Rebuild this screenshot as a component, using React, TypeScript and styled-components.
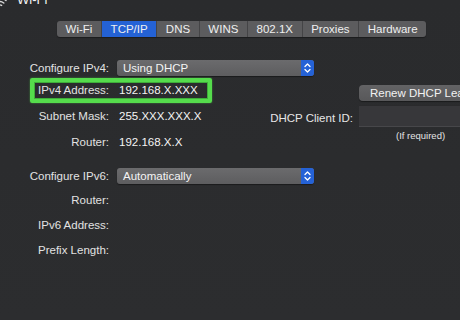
import styled, { createGlobalStyle } from "styled-components";

const GlobalStyle = createGlobalStyle`
  html, body {
    margin: 0;
    padding: 0;
    background: #2b2c2e;
  }
  body {
    width: 460px;
    height: 320px;
    overflow: hidden;
    font-family: "Liberation Sans", Arial, sans-serif;
    color: #e6e6e6;
  }
`;

const Window = styled.div`
  display: flex;
  flex-direction: column;
  width: 460px;
  height: 320px;
  background: linear-gradient(180deg, #2a2b2d 0%, #2c2d2f 100%);
`;

const Header = styled.div`
  display: flex;
  align-items: center;
  height: 16px;
  margin-top: -8px;
`;

const WifiGlyph = styled.svg`
  width: 14px;
  height: 12px;
  margin-left: -7px;
  margin-right: 10px;
  margin-top: 4px;
`;

const Title = styled.span`
  font-size: 13px;
  line-height: 16px;
  color: #f4f4f4;
`;

const TabBar = styled.div`
  display: flex;
  align-self: flex-start;
  margin: 13px 0 0 57px;
  height: 16px;
  background: #5c5c5e;
  border-radius: 3px;
  overflow: hidden;
  box-shadow: 0 1px 1px rgba(0, 0, 0, 0.35);
`;

const Tab = styled.div<{ $active?: boolean }>`
  padding: 0 8.6px;
  font-size: 11.5px;
  line-height: 16px;
  white-space: nowrap;
  color: #efefef;
  background: ${(p) => (p.$active ? "#2462d5" : "transparent")};
  border-left: 1px solid #444446;

  &:first-child {
    border-left: none;
  }
`;

const Form = styled.div`
  display: grid;
  grid-template-columns: 109px 145px 87px 1fr;
  grid-template-rows: 16px 28px 24px 28px 32px 24px 25px 26px;
  column-gap: 6px;
  margin-top: 23px;
  font-size: 11.5px;
`;

const Label = styled.div<{ $row: number; $spaced?: boolean }>`
  grid-row: ${(p) => p.$row};
  grid-column: 1;
  justify-self: end;
  align-self: center;
  margin-top: ${(p) => (p.$spaced ? "8px" : "0")};
  line-height: 16px;
  white-space: nowrap;
  color: #e2e2e2;
`;

const Value = styled.div<{ $row: number }>`
  grid-row: ${(p) => p.$row};
  grid-column: 2;
  align-self: center;
  padding-left: 4px;
  line-height: 16px;
  white-space: nowrap;
  color: #f4f4f4;
`;

const Popup = styled.div<{ $row: number; $spaced?: boolean }>`
  grid-row: ${(p) => p.$row};
  grid-column: 2 / 4;
  justify-self: start;
  align-self: center;
  margin-left: 2px;
  margin-top: ${(p) => (p.$spaced ? "8px" : "0")};
  display: flex;
  width: 197px;
  height: 16px;
  border-radius: 3px;
  overflow: hidden;
  background: linear-gradient(180deg, #6b6b6d 0%, #5d5d5f 100%);
  box-shadow: 0 1px 1px rgba(0, 0, 0, 0.4);
`;

const PopupText = styled.span`
  flex: 1;
  padding-left: 6px;
  line-height: 16px;
  color: #f4f4f4;
  white-space: nowrap;
`;

const Stepper = styled.span`
  display: flex;
  align-items: center;
  justify-content: center;
  width: 13px;
  background: #2562d6;
`;

const SideLabel = styled.div<{ $row: number }>`
  grid-row: ${(p) => p.$row};
  grid-column: 3;
  justify-self: end;
  align-self: center;
  margin-top: 3px;
  white-space: nowrap;
  color: #e6e6e6;
`;

const RenewButton = styled.button<{ $row: number }>`
  grid-row: ${(p) => p.$row};
  grid-column: 4;
  justify-self: start;
  align-self: end;
  margin-bottom: 3px;
  height: 16px;
  padding: 0 11px;
  border: none;
  border-radius: 4px;
  background: linear-gradient(180deg, #636365 0%, #58585a 100%);
  box-shadow: 0 1px 1px rgba(0, 0, 0, 0.4);
  font-family: inherit;
  font-size: 11.5px;
  line-height: 16px;
  color: #f2f2f2;
  white-space: nowrap;
`;

const TextField = styled.div<{ $row: number }>`
  grid-row: ${(p) => p.$row};
  grid-column: 4;
  justify-self: start;
  align-self: center;
  width: 130px;
  height: 22px;
  box-sizing: border-box;
  background: #37373a;
  border-top: 1px solid #2a2a2c;
  border-bottom: 1px solid #47474a;
`;

const Hint = styled.div<{ $row: number }>`
  grid-row: ${(p) => p.$row};
  grid-column: 4;
  justify-self: start;
  align-self: start;
  margin: 2px 0 0 37px;
  font-size: 9.5px;
  line-height: 11px;
  color: #e4e4e4;
  white-space: nowrap;
`;

const Highlight = styled.div<{ $row: number }>`
  grid-row: ${(p) => p.$row};
  grid-column: 1 / 3;
  justify-self: start;
  align-self: center;
  margin-left: 30px;
  width: 182px;
  height: 25px;
  box-sizing: border-box;
  border: 4px solid #55dc4c;
  border-radius: 2px;
  box-shadow: inset 0 0 0 1px #3fae3a, 0 0 2px rgba(85, 220, 76, 0.6);
  pointer-events: none;
`;

function StepperIcon() {
  return (
    <svg width="7" height="12" viewBox="0 0 7 12" fill="none">
      <path d="M1 4.5 L3.5 2 L6 4.5" stroke="#fff" strokeWidth="1.3" strokeLinecap="round" strokeLinejoin="round" />
      <path d="M1 7.5 L3.5 10 L6 7.5" stroke="#fff" strokeWidth="1.3" strokeLinecap="round" strokeLinejoin="round" />
    </svg>
  );
}

const tabs = ["Wi-Fi", "TCP/IP", "DNS", "WINS", "802.1X", "Proxies", "Hardware"];

export default function App() {
  return (
    <>
      <GlobalStyle />
      <Window>
        <Header>
          <WifiGlyph viewBox="0 0 14 12" fill="none">
            <path d="M1 4.5 A9 9 0 0 1 13 4.5" stroke="#d8d8d8" strokeWidth="1.4" strokeLinecap="round" />
            <path d="M3.2 7 A6 6 0 0 1 10.8 7" stroke="#d8d8d8" strokeWidth="1.4" strokeLinecap="round" />
            <path d="M5.4 9.4 A3 3 0 0 1 8.6 9.4" stroke="#d8d8d8" strokeWidth="1.4" strokeLinecap="round" />
          </WifiGlyph>
          <Title>Wi-Fi</Title>
        </Header>

        <TabBar>
          {tabs.map((t) => (
            <Tab key={t} $active={t === "TCP/IP"}>
              {t}
            </Tab>
          ))}
        </TabBar>

        <Form>
          <Label $row={1}>Configure IPv4:</Label>
          <Popup $row={1}>
            <PopupText>Using DHCP</PopupText>
            <Stepper>
              <StepperIcon />
            </Stepper>
          </Popup>

          <Label $row={2}>IPv4 Address:</Label>
          <Value $row={2}>192.168.X.XXX</Value>
          <RenewButton $row={2} type="button">
            Renew DHCP Lease
          </RenewButton>
          <Highlight $row={2} />

          <Label $row={3}>Subnet Mask:</Label>
          <Value $row={3}>255.XXX.XXX.X</Value>
          <SideLabel $row={3}>DHCP Client ID:</SideLabel>
          <TextField $row={3} />

          <Label $row={4}>Router:</Label>
          <Value $row={4}>192.168.X.X</Value>
          <Hint $row={4}>(If required)</Hint>

          <Label $row={5} $spaced>
            Configure IPv6:
          </Label>
          <Popup $row={5} $spaced>
            <PopupText>Automatically</PopupText>
            <Stepper>
              <StepperIcon />
            </Stepper>
          </Popup>

          <Label $row={6}>Router:</Label>
          <Label $row={7}>IPv6 Address:</Label>
          <Label $row={8}>Prefix Length:</Label>
        </Form>
      </Window>
    </>
  );
}
